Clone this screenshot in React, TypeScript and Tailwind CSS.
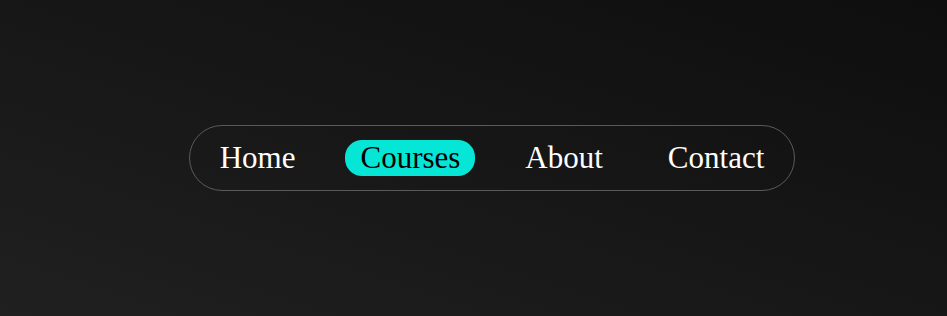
const links = ['Home', 'Courses', 'About', 'Contact'];

export default function App() {
  const active = 'Courses';

  return (
    <div className="flex h-[316px] w-full items-center justify-center bg-gradient-to-tr from-[#202020] to-[#0e0e0e] pl-[37px]">
      <nav className="flex items-center gap-[35px] rounded-full border border-[#5a5a5a] px-[15px] py-[14px]">
        {links.map((link) => (
          <a
            key={link}
            href="#"
            className={`rounded-[17px] px-[15px] font-['Liberation_Serif',serif] text-[31px] leading-[36px] ${
              link === active ? 'bg-[#06e6d6] text-black' : 'text-white'
            }`}
          >
            {link}
          </a>
        ))}
      </nav>
    </div>
  );
}
